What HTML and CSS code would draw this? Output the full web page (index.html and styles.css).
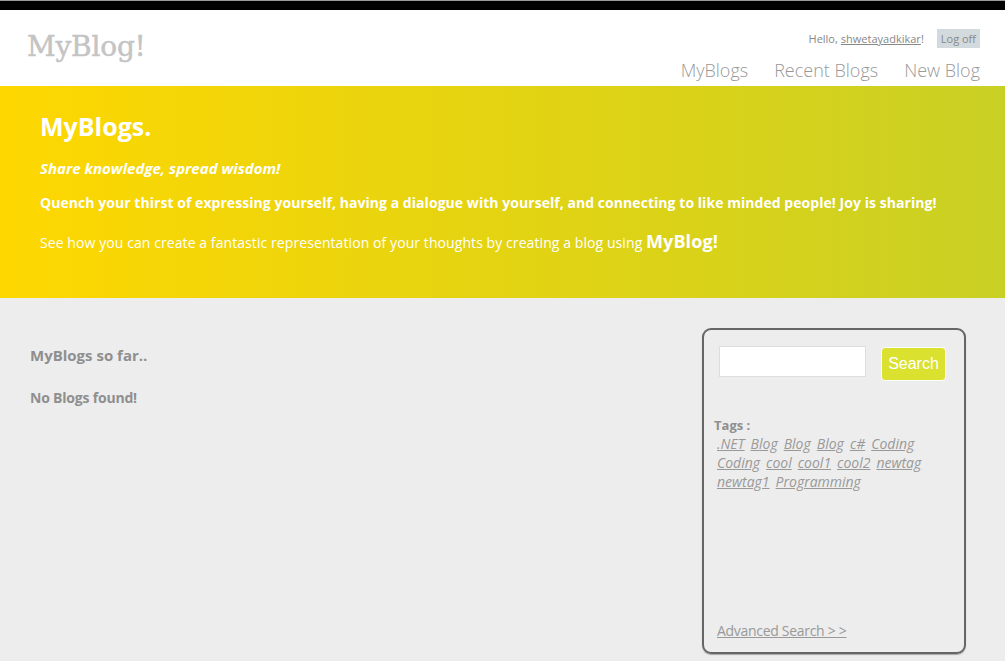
FILE: index.html
```html
<!DOCTYPE html>
<html>
<head>
<meta charset="utf-8">
<title>MyBlog!</title>
<link rel="stylesheet" href="styles.css">
</head>
<body>
<div class="topbar"></div>
<header class="header">
  <div class="logo">MyBlog!</div>
  <div class="header-right">
    <div class="login">Hello, <a href="#" class="user">shwetayadkikar</a>! <a href="#" class="logoff">Log off</a></div>
    <nav class="nav">
      <a href="#">MyBlogs</a>
      <a href="#">Recent Blogs</a>
      <a href="#">New Blog</a>
    </nav>
  </div>
</header>
<section class="banner">
  <h1 class="banner-title">MyBlogs.</h1>
  <p class="tagline">Share knowledge, spread wisdom!</p>
  <p class="quench">Quench your thirst of expressing yourself, having a dialogue with yourself, and connecting to like minded people! Joy is sharing!</p>
  <p class="see">See how you can create a fantastic representation of your thoughts by creating a blog using <b class="brand">MyBlog!</b></p>
</section>
<main class="main">
  <div class="content">
    <h2 class="so-far">MyBlogs so far..</h2>
    <p class="none">No Blogs found!</p>
  </div>
  <aside class="sidebar">
    <div class="search-row">
      <input class="search-input" type="text">
      <button class="search-btn">Search</button>
    </div>
    <div class="tags">
      <div class="tags-label">Tags :</div>
      <div class="tag-list">
        <a href="#">.NET</a><a href="#">Blog</a><a href="#">Blog</a><a href="#">Blog</a><a href="#">c#</a><a href="#">Coding</a><a href="#">Coding</a><a href="#">cool</a><a href="#">cool1</a><a href="#">cool2</a><a href="#">newtag</a><a href="#">newtag1</a><a href="#">Programming</a>
      </div>
    </div>
    <a href="#" class="advanced">Advanced Search &gt; &gt;</a>
  </aside>
</main>
</body>
</html>
```
FILE: styles.css
```css
html, body {
  margin: 0;
  padding: 0;
}
body {
  background: #ededed;
  font-family: "Open Sans", "Noto Sans", sans-serif;
  color: #999;
  height: 661px;
  overflow: hidden;
}
.topbar {
  height: 10px;
  background: #000;
  border-top: 1px solid #999;
  box-sizing: border-box;
}
.header {
  background: #fff;
  height: 76px;
  display: flex;
  justify-content: space-between;
  padding: 0 25px 0 27px;
}
.logo {
  font-family: "DejaVu Serif", serif;
  font-size: 28px;
  color: #c4c4c4;
  margin-top: 20px;
  letter-spacing: -0.2px;
  -webkit-text-stroke: 0.5px #c4c4c4;
}
.header-right {
  display: flex;
  flex-direction: column;
  align-items: flex-end;
}
.login {
  margin-top: 19px;
  font-size: 11px;
  color: #888;
  display: flex;
  align-items: center;
}
.login .user {
  color: #888;
  margin-left: 3px;
}
.logoff {
  background: #d3dadd;
  color: #888;
  text-decoration: none;
  padding: 2px 4px;
  margin-left: 13px;
}
.nav {
  display: flex;
  gap: 26px;
  margin-top: 10px;
}
.nav a {
  color: #999;
  text-decoration: none;
  font-size: 18px;
  font-weight: 300;
}
.banner {
  height: 212px;
  box-sizing: border-box;
  background: linear-gradient(to right, #fed700, #c9d024);
  color: #fff;
  padding: 21px 40px 0;
}
.banner-title {
  margin: 0;
  font-size: 25px;
  font-weight: 700;
  line-height: 38px;
}
.tagline {
  margin: 13px 0 0;
  font-size: 15px;
  font-style: italic;
  font-weight: 700;
}
.quench {
  margin: 15px 0 0;
  font-size: 14px;
  font-weight: 700;
  letter-spacing: 0.05px;
  white-space: nowrap;
}
.see {
  margin: 17px 0 0;
  font-size: 14px;
  letter-spacing: 0.08px;
}
.brand {
  font-size: 18px;
}
.main {
  display: flex;
  padding: 30px 39px 0 30px;
}
.content {
  flex: 1;
}
.so-far {
  margin: 17px 0 0;
  font-size: 15px;
  font-weight: 700;
  color: #8f8f8f;
}
.none {
  margin: 23px 0 0;
  font-size: 14px;
  font-weight: 700;
  color: #8f8f8f;
  letter-spacing: -0.2px;
}
.sidebar {
  width: 264px;
  height: 326px;
  box-sizing: border-box;
  border: 2px solid #666;
  border-radius: 9px;
  box-shadow: 0 1px 1px rgba(0,0,0,0.3);
  padding: 16px 18px 12px 10px;
  display: flex;
  flex-direction: column;
}
.search-row {
  display: flex;
  align-items: flex-start;
  padding-left: 5px;
}
.search-input {
  width: 147px;
  height: 31px;
  box-sizing: border-box;
  border: 1px solid #ddd;
  background: #fff;
  margin: 0;
  padding: 0;
}
.search-btn {
  margin-left: 15px;
  width: 65px;
  height: 34px;
  margin-top: 1px;
  background: #dae12f;
  border: 1px solid #fff;
  border-radius: 4px;
  color: #fff;
  font-family: "Liberation Sans", Arial, sans-serif;
  font-size: 16px;
  padding: 0;
}
.tags {
  margin-top: 35px;
}
.tags-label {
  font-size: 13px;
  font-weight: 700;
  color: #8f8f8f;
}
.tag-list {
  padding-left: 3px;
  font-family: "Open Sans", sans-serif;
  font-style: italic;
  font-size: 14px;
  line-height: 19px;
  margin-top: 0;
  width: 230px;
}
.tag-list a {
  color: #999;
  display: inline-block;
  margin-right: 6px;
}
.advanced {
  margin-top: auto;
  margin-left: 3px;
  font-size: 14px;
  color: #999;
  letter-spacing: -0.3px;
}
```
